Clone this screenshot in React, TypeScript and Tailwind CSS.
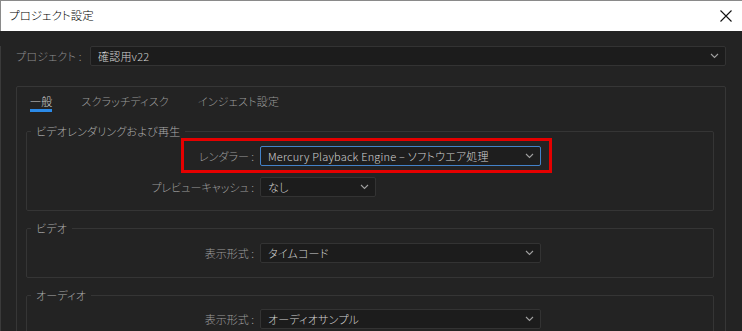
// Premiere-style "Project Settings" dialog, General tab.

const FONT = "font-['Noto_Sans_CJK_JP','Noto_Sans',sans-serif] [font-feature-settings:'palt'] font-light";

function Chevron() {
  return (
    <svg width="9" height="6" viewBox="0 0 9 6" className="shrink-0">
      <polyline points="1,1 4.5,4.5 8,1" fill="none" stroke="#a0a0a0" strokeWidth="1.1" />
    </svg>
  );
}

function Select({
  value,
  width,
  active = false,
}: {
  value: string;
  width: string;
  active?: boolean;
}) {
  return (
    <div
      className={`flex h-[20px] items-center justify-between rounded-[2px] border pl-[7px] pr-[6px] text-[11px] text-[#d2d2d2] ${width} ${
        active ? "border-[#4382c9] bg-[#1e1e1e]" : "border-[#333333] bg-[#1c1c1c]"
      }`}
    >
      <span className="whitespace-nowrap leading-none tracking-[0.2px]">{value}</span>
      <Chevron />
    </div>
  );
}

function Row({
  label,
  value,
  width,
  active,
}: {
  label: string;
  value: string;
  width: string;
  active?: boolean;
}) {
  return (
    <div className="flex items-center">
      <span className="w-[227px] shrink-0 whitespace-pre text-right text-[11px] leading-none text-[#9c9c9c]">
        {label} :
      </span>
      <div className="ml-[6px]">
        <Select value={value} width={width} active={active} />
      </div>
    </div>
  );
}

function Group({
  title,
  children,
  className = "",
}: {
  title: string;
  children: React.ReactNode;
  className?: string;
}) {
  return (
    <fieldset
      className={`ml-[9px] mr-[11px] rounded-[2px] border border-[#353535] px-0 ${className}`}
    >
      <legend className="ml-[4px] px-[5px] text-[11px] leading-[16px] tracking-[0.2px] text-[#ababab]">
        {title}
      </legend>
      {children}
    </fieldset>
  );
}

export default function App() {
  return (
    <div className={`h-[331px] w-[742px] overflow-hidden bg-[#232323] ${FONT}`}>
      <div className="flex h-[31px] items-center justify-between border-l border-t border-[#8a8a8a] bg-white pl-[8px] pr-[10px]">
        <span className="text-[11.5px] text-black">プロジェクト設定</span>
        <svg width="12" height="12" viewBox="0 0 12 12">
          <path d="M0.5 0.5 L11.5 11.5 M11.5 0.5 L0.5 11.5" stroke="#111" strokeWidth="1.1" />
        </svg>
      </div>

      <div className="border-l border-[#3a3a3a] pr-[16px]">
        <div className="mt-[15px] flex items-center pl-[15px]">
          <span className="w-[74px] shrink-0 whitespace-pre text-[11px] leading-none tracking-[0.2px] text-[#8e8e8e]">
            プロジェクト :
          </span>
          <Select value="確認用v22" width="w-[636px]" />
        </div>

        <div className="ml-[15px] mt-[20px] h-[260px] rounded-[2px] border border-[#363636]">
          <div className="flex pl-[13px] pt-[7px] text-[11px] leading-[14px] tracking-[0.2px]">
            <div className="flex flex-col items-center">
              <span className="text-[#d0d0d0]">一般</span>
              <span className="mt-[1px] h-[3px] w-[22px] bg-[#2b8ae8]" />
            </div>
            <span className="ml-[29px] text-[#9a9a9a]">スクラッチディスク</span>
            <span className="ml-[29px] text-[#9a9a9a]">インジェスト設定</span>
          </div>

          <Group title="ビデオレンダリングおよび再生" className="mt-[11px] pb-[13px] pt-[7px]">
            <div className="relative">
              <Row
                label="レンダラー"
                value="Mercury Playback Engine – ソフトウエア処理"
                width="w-[281px]"
                active
              />
              <div className="pointer-events-none absolute left-[154px] top-[-8px] h-[35px] w-[371px] border-[3px] border-[#e50000]" />
            </div>
            <div className="mt-[11px]">
              <Row label="プレビューキャッシュ" value="なし" width="w-[116px]" />
            </div>
          </Group>

          <Group title="ビデオ" className="mt-[9px] pb-[14px] pt-[7px]">
            <Row label="表示形式" value="タイムコード" width="w-[281px]" />
          </Group>

          <Group title="オーディオ" className="mt-[9px] pb-[14px] pt-[6px]">
            <Row label="表示形式" value="オーディオサンプル" width="w-[281px]" />
          </Group>
        </div>
      </div>
    </div>
  );
}
